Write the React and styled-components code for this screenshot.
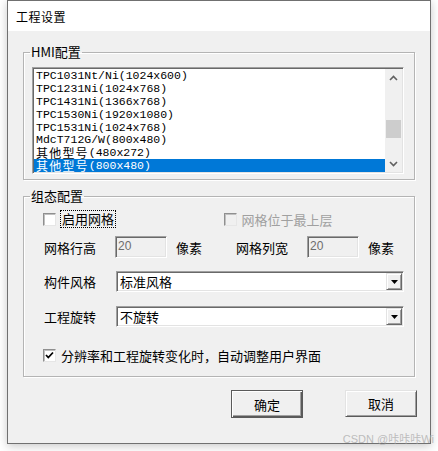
import React from 'react'
import styled, { createGlobalStyle } from 'styled-components'

const GlobalStyle = createGlobalStyle`
  html, body { margin: 0; padding: 0; background: #fff; }
  body { font-family: "Noto Sans CJK SC", "Liberation Sans", sans-serif; font-size: 13px; color: #000; }
`

const models = [
  { cn: '', en: 'TPC1031Nt/Ni(1024x600)' },
  { cn: '', en: 'TPC1231Ni(1024x768)' },
  { cn: '', en: 'TPC1431Ni(1366x768)' },
  { cn: '', en: 'TPC1530Ni(1920x1080)' },
  { cn: '', en: 'TPC1531Ni(1024x768)' },
  { cn: '', en: 'MdcT712G/W(800x480)' },
  { cn: '其他型号', en: '(480x272)' },
  { cn: '其他型号', en: '(800x480)', selected: true },
]

function Dialog() {
  return (
    <Page>
      <GlobalStyle />
      <Window>
        <TitleBar>工程设置</TitleBar>
        <Body>
          <Group>
            <Legend>HMI配置</Legend>
            <HmiInner>
              <ListBox>
                <ListRows>
                  {models.map((m, i) => (
                    <ListRow key={i} selected={m.selected}>
                      {m.cn && <Cjk>{m.cn}</Cjk>}
                      {m.en}
                    </ListRow>
                  ))}
                </ListRows>
                <ScrollBar>
                  <Arrow>
                    <svg width="9" height="6" viewBox="0 0 9 6">
                      <polyline points="1,5 4.5,1.5 8,5" fill="none" stroke="#606060" strokeWidth="1.6" />
                    </svg>
                  </Arrow>
                  <Track>
                    <Thumb />
                  </Track>
                  <Arrow>
                    <svg width="9" height="6" viewBox="0 0 9 6">
                      <polyline points="1,1 4.5,4.5 8,1" fill="none" stroke="#606060" strokeWidth="1.6" />
                    </svg>
                  </Arrow>
                </ScrollBar>
              </ListBox>
            </HmiInner>
          </Group>

          <Group second>
            <Legend>组态配置</Legend>
            <ConfigInner>
              <CheckRow>
                <CheckCell>
                  <CheckBox />
                  <FocusLabel>启用网格</FocusLabel>
                </CheckCell>
                <CheckCell>
                  <CheckBox disabled />
                  <CheckLabel disabled>网格位于最上层</CheckLabel>
                </CheckCell>
              </CheckRow>
              <GridRow>
                <Label>网格行高</Label>
                <div><NumField>20</NumField></div>
                <Label>像素</Label>
                <Label>网格列宽</Label>
                <div><NumField>20</NumField></div>
                <Label>像素</Label>
              </GridRow>
              <ComboRow>
                <ComboLabel>构件风格</ComboLabel>
                <Combo>
                  <ComboText>标准风格</ComboText>
                  <DropButton>
                    <svg width="7" height="4" viewBox="0 0 7 4"><polygon points="0,0 7,0 3.5,4" fill="#000" /></svg>
                  </DropButton>
                </Combo>
              </ComboRow>
              <ComboRow rotate>
                <ComboLabel>工程旋转</ComboLabel>
                <Combo>
                  <ComboText>不旋转</ComboText>
                  <DropButton>
                    <svg width="7" height="4" viewBox="0 0 7 4"><polygon points="0,0 7,0 3.5,4" fill="#000" /></svg>
                  </DropButton>
                </Combo>
              </ComboRow>
              <AutoRow>
                <CheckBox>
                  <svg width="9" height="9" viewBox="0 0 9 9">
                    <polyline points="1,4 3.3,6.5 8,1.5" fill="none" stroke="#000" strokeWidth="1.8" />
                  </svg>
                </CheckBox>
                <CheckLabel>分辨率和工程旋转变化时，自动调整用户界面</CheckLabel>
              </AutoRow>
            </ConfigInner>
          </Group>

          <ButtonRow>
            <Button primary>确定</Button>
            <Button>取消</Button>
          </ButtonRow>
        </Body>
      </Window>
      <Watermark>CSDN @咔咔咔Wi</Watermark>
    </Page>
  )
}

export default Dialog

const Page = styled.div`
position:relative;
width:438px;
height:451px;
overflow:hidden;
`
const Window = styled.div`
margin-left:7px;
width:424px;
height:444px;
box-sizing:border-box;
border:1px solid #707070;
background:#f0f0f0;
box-shadow:0 2px 9px rgba(0,0,0,0.22);
display:flex;
flex-direction:column;
`
const TitleBar = styled.div`
height:30px;
background:#fff;
padding-left:8px;
display:flex;
align-items:center;
font-size:12px;
letter-spacing:0.5px;
`
const Body = styled.div`
padding:0 15px;
display:flex;
flex-direction:column;
`
const Group = styled.fieldset`
margin:${p => (p.second ? '8px 0 0' : '13px 0 0')};
padding:0;
border:1px solid #b4b4b4;
box-shadow:inset 1px 1px 0 #fff, 1px 1px 0 #fff;
min-width:0;
`
const Legend = styled.legend`
margin-left:6px;
padding:0 1px;
height:16px;
line-height:16px;
font-size:13px;
`
const HmiInner = styled.div`
padding:7px 10px 5px 8px;
`
const ConfigInner = styled.div`
padding:0 10px 12px 20px;
`
const sunken = `
border-style:solid;
border-width:1px;
border-color:#a0a0a0 #fff #fff #a0a0a0;
box-shadow:inset 1px 1px 0 #696969, inset -1px -1px 0 #e3e3e3;
`
const ListBox = styled.div`
${sunken}
height:107px;
box-sizing:border-box;
background:#fff;
padding:1px;
display:flex;
overflow:hidden;
`
const ListRows = styled.div`
flex:1;
display:flex;
flex-direction:column;
`
const ListRow = styled.div`
height:13px;
line-height:13px;
padding-left:2px;
font-family:"Liberation Mono", "Noto Sans CJK SC", monospace;
font-size:11.5px;
white-space:nowrap;
overflow:hidden;
background:${p => (p.selected ? '#0078d7' : 'transparent')};
color:${p => (p.selected ? '#fff' : '#000')};
`
const Cjk = styled.span`
display:inline-block;
vertical-align:top;
height:13px;
line-height:13px;
font-family:"Noto Sans CJK SC", sans-serif;
font-size:12px;
letter-spacing:1.2px;
`
const ScrollBar = styled.div`
width:17px;
background:#f0f0f0;
display:flex;
flex-direction:column;
`
const Arrow = styled.div`
height:17px;
display:flex;
align-items:center;
justify-content:center;
`
const Track = styled.div`
flex:1;
display:flex;
flex-direction:column;
justify-content:flex-end;
padding:0 1px 17px;
`
const Thumb = styled.div`
height:18px;
background:#cdcdcd;
`
const CheckRow = styled.div`
display:flex;
height:18px;
margin:6px 0 0 -1px;
align-items:center;
`
const CheckCell = styled.div`
display:flex;
align-items:center;
width:193px;
`
const CheckBox = styled.div`
width:13px;
height:13px;
box-sizing:border-box;
border:1px solid;
border-color:#8f8f8f #e6e6e6 #e6e6e6 #8f8f8f;
box-shadow:inset 1px 1px 0 #c0c0c0;
background:${p => (p.disabled ? '#f0f0f0' : '#fff')};
display:flex;
align-items:center;
justify-content:center;
margin-right:5px;
flex:none;
`
const CheckLabel = styled.span`
color:${p => (p.disabled ? '#a0a0a0' : '#000')};
font-size:13px;
`
const FocusLabel = styled.span`
border:1px dotted #000;
padding:0 1px;
margin-left:-1px;
line-height:16px;
font-size:13px;
`
const GridRow = styled.div`
display:grid;
grid-template-columns:71px 61px 60px 71px 61px auto;
align-items:center;
height:22px;
margin-top:8px;
`
const Label = styled.span`
font-size:13px;
`
const NumField = styled.div`
${sunken}
width:52px;
height:22px;
box-sizing:border-box;
background:#f0f0f0;
color:#6d6d6d;
font-family:"Liberation Sans", sans-serif;
font-size:12px;
line-height:19px;
padding-left:2px;
`
const ComboRow = styled.div`
display:flex;
align-items:center;
height:21px;
margin-top:${p => (p.rotate ? '14px' : '13px')};
`
const ComboLabel = styled.span`
width:72px;
font-size:13px;
flex:none;
`
const Combo = styled.div`
${sunken}
flex:1;
height:21px;
box-sizing:border-box;
background:#fff;
display:flex;
align-items:stretch;
padding:1px;
`
const ComboText = styled.div`
flex:1;
padding-left:2px;
font-size:13px;
line-height:17px;
`
const DropButton = styled.div`
width:16px;
box-sizing:border-box;
background:#f0f0f0;
border:1px solid;
border-color:#e3e3e3 #696969 #696969 #e3e3e3;
box-shadow:inset 1px 1px 0 #fff, inset -1px -1px 0 #a0a0a0;
display:flex;
align-items:center;
justify-content:center;
`
const AutoRow = styled.div`
display:flex;
align-items:center;
height:18px;
margin:19px 0 0 -1px;
`
const ButtonRow = styled.div`
display:flex;
justify-content:flex-end;
gap:42px;
margin:13px -2px 0 0;
`
const Button = styled.div`
width:72px;
height:${p => (p.primary ? '28px' : '27px')};
box-sizing:border-box;
background:#f0f0f0;
border:1px solid;
border-color:${p => (p.primary ? '#5a5a5a' : '#e3e3e3 #5a5a5a #5a5a5a #e3e3e3')};
box-shadow:${p => (p.primary
  ? 'inset 1px 1px 0 #fff, inset -1px -1px 0 #5a5a5a, inset -2px -2px 0 #a0a0a0'
  : 'inset 1px 1px 0 #fff, inset -1px -1px 0 #a0a0a0')};
display:flex;
align-items:center;
justify-content:center;
font-size:13px;
`
const Watermark = styled.div`
position:absolute;
right:4px;
bottom:5px;
font-family:"Liberation Sans", "Noto Sans CJK SC", sans-serif;
font-size:11px;
color:rgba(170,170,170,0.75);
`
